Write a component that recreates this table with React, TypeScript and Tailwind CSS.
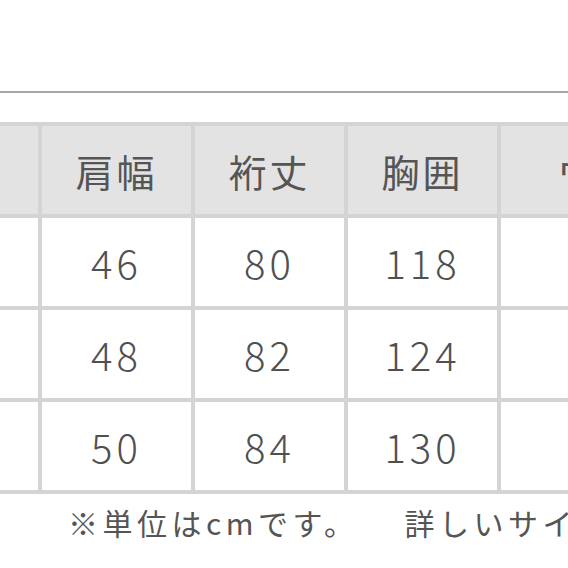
import React from 'react';

const headers = ['', '肩幅', '裄丈', '胸囲', 'ウエスト'];
const rows = [
  ['', '46', '80', '118', ''],
  ['', '48', '82', '124', ''],
  ['', '50', '84', '130', ''],
];

const font = { fontFamily: '"Noto Sans CJK JP", "Noto Sans", sans-serif' };

const App: React.FC = () => {
  return (
    <div className="w-[568px] h-[568px] bg-white overflow-hidden flex flex-col" style={font}>
      {/* divider above the table */}
      <div className="mt-[91px] h-[2px] w-full bg-[#a6a6a6]" />

      {/* size table, outer columns run off the edges */}
      <div className="mt-[29px] ml-[-115px] w-[900px]">
        <div className="grid grid-cols-[149px_149px_149px_149px_290px] gap-[4px] p-[4px] bg-[#d4d4d4]">
          {headers.map((h, i) => (
            <div
              key={'h' + i}
              className={
                i === 4
                  ? 'h-[88px] bg-[#e3e3e3] flex items-center justify-start pl-[56px] text-[38px] tracking-[3px] text-[#555555] whitespace-nowrap'
                  : 'h-[88px] bg-[#e3e3e3] flex items-center justify-center text-[38px] tracking-[3px] text-[#555555] whitespace-nowrap'
              }
            >
              {h}
            </div>
          ))}
          {rows.map((row, r) =>
            row.map((cell, i) => (
              <div
                key={r + '-' + i}
                className="h-[88px] bg-white flex items-center justify-center text-[40px] font-light tracking-[4px] text-[#505050]"
              >
                {cell}
              </div>
            ))
          )}
        </div>
      </div>

      {/* note under the table */}
      <div className="mt-[8px] pl-[68px] flex whitespace-nowrap text-[30px] tracking-[4.5px] text-[#555555] leading-[40px]">
        <span>※単位はcmです。</span>
        <span className="ml-[46px]">詳しいサイズ</span>
      </div>
    </div>
  );
};

export default App;
